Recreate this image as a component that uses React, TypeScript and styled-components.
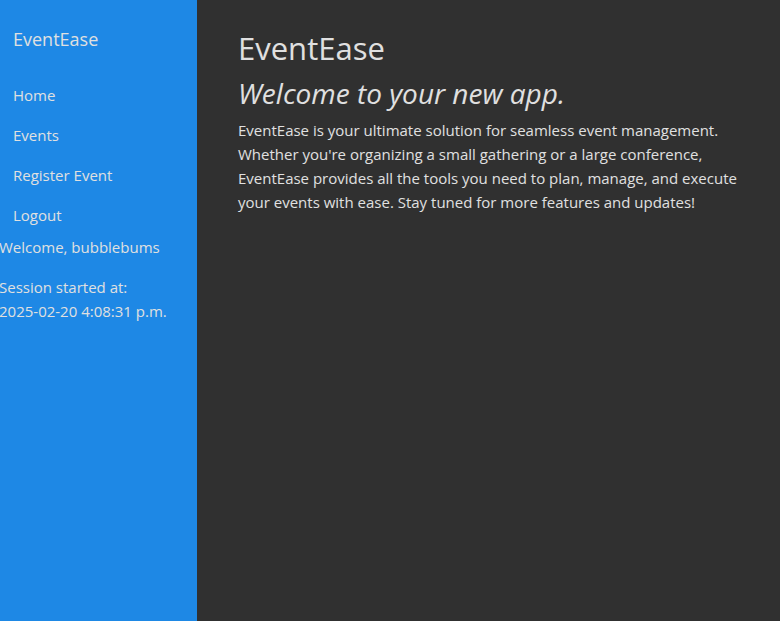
import React from "react";
import styled, { createGlobalStyle } from "styled-components";

const GlobalStyle = createGlobalStyle`
  html, body {
    margin: 0;
    padding: 0;
    height: 100%;
    background: #303030;
  }
  #root {
    height: 100%;
  }
  * {
    box-sizing: border-box;
  }
`;

const navLinks = ["Home", "Events", "Register Event", "Logout"];

export default function App() {
  return (
    <>
      <GlobalStyle />
      <Page>
        <Sidebar>
          <Brand>EventEase</Brand>
          <NavList>
            {navLinks.map((label) => (
              <NavItem key={label}>{label}</NavItem>
            ))}
          </NavList>
          <UserInfo>
            <p>Welcome, bubblebums</p>
            <p className="session">
              Session started at:
              <br />
              2025-02-20 4:08:31 p.m.
            </p>
          </UserInfo>
        </Sidebar>

        <Main>
          <h1>EventEase</h1>
          <h2>Welcome to your new app.</h2>
          <p>
            EventEase is your ultimate solution for seamless event management.
            Whether you're organizing a small gathering or a large conference,
            EventEase provides all the tools you need to plan, manage, and
            execute your events with ease. Stay tuned for more features and
            updates!
          </p>
        </Main>
      </Page>
    </>
  );
}

const Page = styled.div`
  display: flex;
  min-height: 100vh;
  font-family: "Open Sans", "Noto Sans", sans-serif;
  color: #e0e0e0;
`;

const Sidebar = styled.aside`
  width: 197px;
  flex-shrink: 0;
  background: #1e88e5;
  display: flex;
  flex-direction: column;
`;

const Brand = styled.div`
  font-size: 18px;
  line-height: 24px;
  padding: 27px 13px 0;
  height: 75px;
`;

const NavList = styled.ul`
  list-style: none;
  margin: 0;
  padding: 0;
`;

const NavItem = styled.li`
  font-size: 15px;
  line-height: 40px;
  padding: 0 13px;
  cursor: pointer;

  &:hover {
    background: rgba(255, 255, 255, 0.08);
  }
`;

const UserInfo = styled.div`
  margin-left: -1px;
  font-size: 15px;
  line-height: 24px;

  p {
    margin: 0 0 16px;
  }
`;

const Main = styled.main`
  flex: 1;
  padding: 28px 41px;

  h1 {
    margin: 0 0 8px;
    font-size: 31px;
    font-weight: 400;
    line-height: 40px;
  }

  h2 {
    margin: 0 0 8px;
    font-size: 28px;
    font-style: italic;
    font-weight: 400;
    line-height: 34px;
  }

  p {
    margin: 0;
    font-size: 15px;
    line-height: 24px;
    max-width: 500px;
  }
`;
